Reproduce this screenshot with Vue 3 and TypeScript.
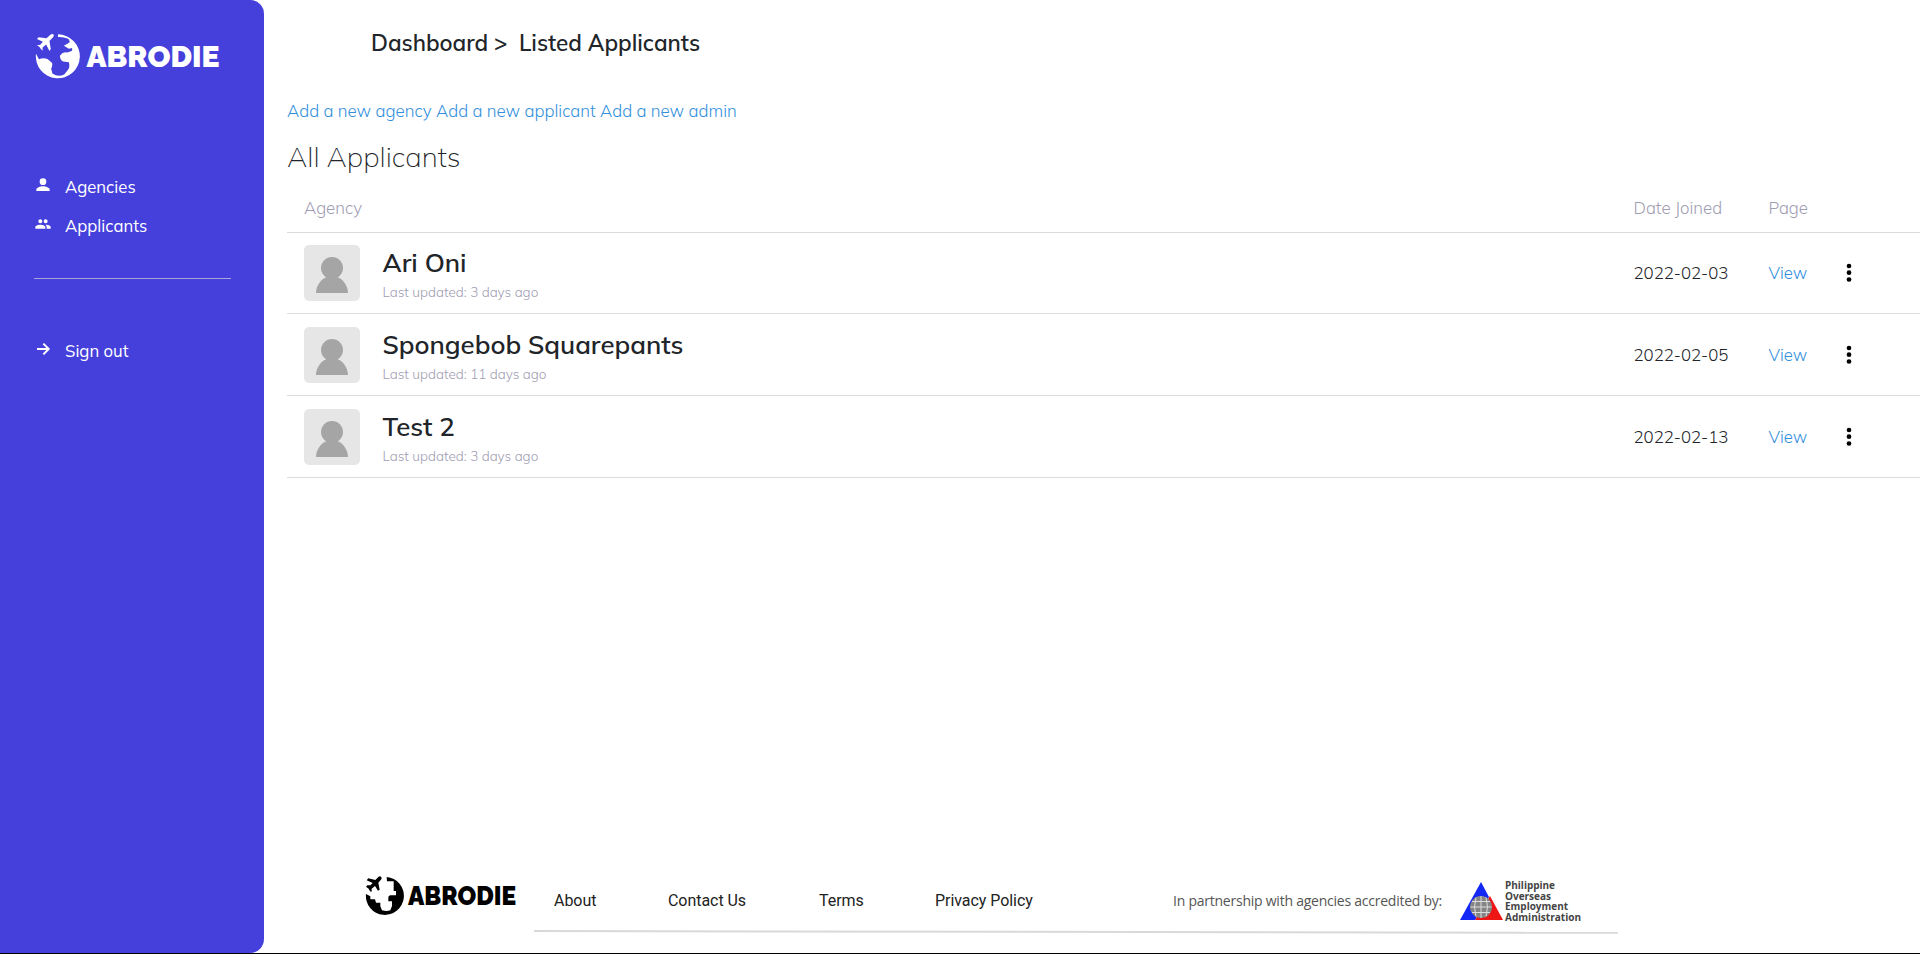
<script setup lang="ts">
interface Applicant {
  name: string
  updated: string
  joined: string
}

const applicants: Applicant[] = [
  { name: 'Ari Oni', updated: '3 days ago', joined: '2022-02-03' },
  { name: 'Spongebob Squarepants', updated: '11 days ago', joined: '2022-02-05' },
  { name: 'Test 2', updated: '3 days ago', joined: '2022-02-13' },
]
</script>

<template>
  <svg width="0" height="0" class="defs">
    <symbol id="globe" viewBox="0 0 140 140">
      <path fill="currentColor" d="M70 4A67 67 0 1 1 3 63L12 80Q24 75 38 79L52 91Q54 101 49 108L53 123Q70 135 89 126L101 111Q107 103 103 89L86 87Q76 82 76 69Q84 57 99 59L113 54L113 46L103 48L88 39L105 29Q107 20 99 17Q87 11 70 12Z" />
      <path fill="currentColor" d="M56 4Q60 9 54 14L44 24L48 49L44 55L34 35L23 44L23 54L18 49L13 42L6 37L16 36L24 27L6 18L11 13L35 16L46 6Q52 1 56 4Z" />
    </symbol>
    <symbol id="globe-dark" viewBox="9 15 117 117">
      <path fill="currentColor" d="M74 18A57 57 0 1 1 12 69L25 76V85H39L42 95H55V106L60 118Q74 122 85 118L90 105V91H79V77L84 73H102V60H95V31H75Z" />
      <path fill="currentColor" d="M57 17Q61 22 56 27L49 35L53 56L48 59L39 45L29 53V62L24 61L20 53L12 47L16 43L25 43L32 36L14 28L19 22L40 27L49 18Q54 14 57 17Z" />
    </symbol>
  </svg>
  <div class="page">
    <aside class="sidebar">
      <svg class="brand" viewBox="0 0 190 50">
        <use href="#globe" x="1" y="1" width="46" height="46" />
        <text x="52.5" y="35" textLength="133" lengthAdjust="spacingAndGlyphs">ABRODIE</text>
      </svg>
      <nav>
        <a class="item"><svg viewBox="0 0 24 24"><path fill="currentColor" d="M12 12a5 5 0 1 0 0-10a5 5 0 0 0 0 10zm-10 9v-2c0-3 6-5 10-5s10 2 10 5v2z" /></svg><span>Agencies</span></a>
        <a class="item"><svg viewBox="0 0 24 24"><path fill="currentColor" d="M16 11a3 3 0 1 0 0-6a3 3 0 0 0 0 6zm-8 0a3 3 0 1 0 0-6a3 3 0 0 0 0 6zm0 2c-2.300 0-7.500 1.200-7.500 3.500V19h15v-2.500C15.500 14.200 10.300 13 8 13zm8.500 0h-1c1.200.8 2 2 2 3.500V19h6v-2.500c0-2.300-4.700-3.500-7-3.500z" /></svg><span>Applicants</span></a>
        <hr>
        <a class="item"><svg viewBox="0 0 24 24"><path fill="none" stroke="currentColor" stroke-width="3" d="M3 12H20M12.500 4l8 8l-8 8" /></svg><span>Sign out</span></a>
      </nav>
    </aside>
    <main class="main">
      <header class="crumbs"><span class="c1">Dashboard &gt;</span><span>Listed Applicants</span></header>
      <div class="links"><a class="l1">Add a new agency</a><a class="l2">Add a new applicant</a><a>Add a new admin</a></div>
      <h1>All Applicants</h1>
      <section class="table">
        <div class="row head"><span class="agency">Agency</span><span class="date">Date Joined</span><span class="view">Page</span></div>
        <div v-for="a in applicants" :key="a.name" class="row">
          <svg class="avatar" viewBox="0 0 56 56"><circle cx="28" cy="23" r="11" /><path d="M12 48C12 41 17 34 22 32.500L23 29H33L34 32.500C39 34 44 41 44 48Z" /></svg>
          <div class="who"><strong>{{ a.name }}</strong><small>Last updated: {{ a.updated }}</small></div>
          <span class="date">{{ a.joined }}</span>
          <a class="view">View</a>
          <svg class="dots" viewBox="0 0 6 20"><circle cx="3" cy="3" r="2.350" /><circle cx="3" cy="9.700" r="2.350" /><circle cx="3" cy="16.500" r="2.350" /></svg>
        </div>
      </section>
      <footer>
        <svg class="mark" viewBox="0 0 155 42">
          <use href="#globe-dark" x="0" y="0" width="39" height="39" />
          <text x="43" y="29" textLength="108" lengthAdjust="spacingAndGlyphs">ABRODIE</text>
        </svg>
        <div class="foot">
          <div class="foot-row">
            <a class="f1">About</a><a class="f2">Contact Us</a><a class="f3">Terms</a><a class="f4">Privacy Policy</a>
            <span class="partner">In partnership with agencies accredited by:</span>
            <svg class="poea" viewBox="0 -1 124 46">
              <path fill="#1428f5" d="M22 3L30 18L16 41H1Z" /><path fill="#ee1515" d="M31 17L44 41H16Z" />
              <circle cx="22" cy="28" r="11" fill="#858585" />
              <path class="grid" d="M11.500 28h21M13 22.500h18M13 33.500h18M22 17v22M17 18.500q-3 9.500 0 19M27 18.500q3 9.500 0 19" />
              <g><text x="46" y="10" textLength="50" lengthAdjust="spacingAndGlyphs">Philippine</text><text x="46" y="20.500" textLength="46" lengthAdjust="spacingAndGlyphs">Overseas</text><text x="46" y="31" textLength="63" lengthAdjust="spacingAndGlyphs">Employment</text><text x="46" y="41.500" textLength="76" lengthAdjust="spacingAndGlyphs">Administration</text></g>
            </svg>
          </div>
          <svg class="rule" viewBox="0 0 1084 4"><path d="M0 1L1084 2.800" /></svg>
        </div>
      </footer>
    </main>
  </div>
</template>

<style>
body { margin: 0; background: #fff; }
</style>

<style scoped>
.defs { display: block; }
.page { display: flex; height: 953px; border-bottom: 1px solid #000; font-family: Mulish, Muli, Lato, "Open Sans", sans-serif; font-weight: 300; color: #212529; overflow: hidden; }
.sidebar { width: 264px; box-sizing: border-box; flex: none; background: #4540db; border-radius: 0 14px 14px 0; color: #fff; padding: 32px 33px 0 34px; }
.brand { display: block; width: 190px; height: 50px; }
.brand text, .mark text { font-family: Raleway, Lato, sans-serif; font-weight: 900; font-size: 29px; fill: currentColor; }
.mark text { font-size: 25px; }
nav { padding-top: 86px; display: flex; flex-direction: column; }
.item { display: flex; height: 39px; align-items: center; font-size: 16.700px; font-weight: 400; }
.item svg { width: 16px; height: 16px; margin: -5px 14px 0 1px; }
.item span { padding-bottom: 2px; }
nav hr { width: 197px; height: 1px; margin: 32px 0 53px; border: 0; background: #a9a3d9; }
.main { flex: 1; min-width: 0; display: flex; flex-direction: column; }
.crumbs { display: flex; padding: 27px 0 0 107px; font-size: 22.400px; font-weight: 600; line-height: 32px; white-space: nowrap; }
.c1 { width: 148px; }
.links { display: flex; padding: 35px 0 0 23px; font-size: 16.900px; line-height: 34px; color: #3490dc; white-space: nowrap; }
.l1 { width: 149px; } .l2 { width: 164px; }
h1 { margin: 11px 0 0 23px; font-size: 28.100px; font-weight: 200; line-height: 36px; }
.table { margin: 9px 0 0 23px; }
.row { display: flex; align-items: center; box-sizing: border-box; height: 82px; border-bottom: 1px solid #dcdcde; padding-left: 17px; font-size: 16.800px; }
.head { height: 49px; color: #9f9db3; padding-bottom: 2px; }
.row:nth-child(2) { height: 81px; }
.row:nth-child(2) .date, .row:nth-child(2) .view { padding-bottom: 2px; }
.row:nth-child(2) .who { padding-top: 4px; }
.agency { flex: 1; }
.avatar { width: 56px; height: 56px; background: #e6e6e6; border-radius: 5px; fill: #a5a5a5; }
.who { flex: 1; padding: 5px 0 0 22.500px; display: flex; flex-direction: column; align-items: flex-start; }
.who strong { font-size: 25.800px; line-height: 32px; font-weight: 600; }
.who small { font-size: 13.500px; line-height: 27px; color: #9f9db3; }
.date { width: 135px; }
.view { width: 151.500px; }
.row:not(.head) .view { width: 77.500px; color: #3490dc; }
.dots { width: 6px; height: 20px; margin-right: 68px; }
footer { margin-top: auto; display: flex; padding: 0 0 19px 101px; font-family: Roboto, sans-serif; font-weight: 400; color: #222; }
.mark { width: 155px; height: 42px; margin: -2px 14px 0 0; color: #000; }
.foot { width: 1084px; }
.foot-row { display: flex; box-sizing: border-box; height: 52px; align-items: center; font-size: 16px; padding: 0 0 7px 20px; letter-spacing: -.05px; white-space: nowrap; }
.f1 { width: 114px; } .f2 { width: 151px; } .f3 { width: 116px; } .f4 { width: 238px; }
.partner { width: 286px; font-family: "Open Sans", sans-serif; font-size: 14px; letter-spacing: -.24px; color: #555; }
.poea { width: 124px; height: 46px; letter-spacing: 0; overflow: visible; }
.poea text { font: 700 10.500px "Open Sans", sans-serif; fill: #444; }
.grid { fill: none; stroke: #ddd; stroke-width: 1; }
.rule { display: block; width: 1084px; height: 4px; }
.rule path { stroke: #d9d9d9; stroke-width: 2; }
</style>
